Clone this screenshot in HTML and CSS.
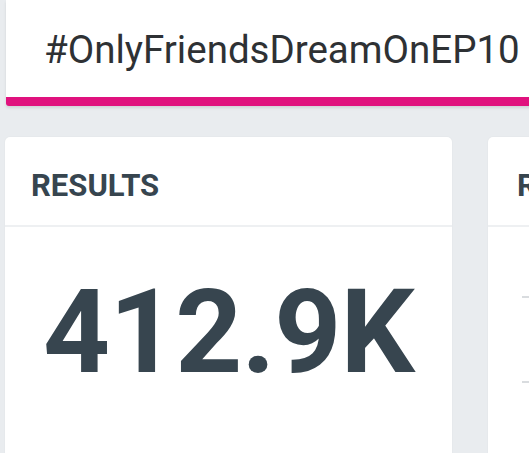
FILE: index.html
```html
<!DOCTYPE html>
<html>
<head>
<meta charset="utf-8">
<link rel="stylesheet" href="styles.css">
</head>
<body>
<div class="page">
  <div class="search">
    <div class="search-text">#OnlyFriendsDreamOnEP10</div>
  </div>
  <div class="cards">
    <div class="card">
      <div class="card-head">RESULTS</div>
      <div class="card-body">
        <div class="big">412.9K</div>
      </div>
    </div>
    <div class="card card-second">
      <div class="card-head">RESULTS</div>
      <div class="card-body lines">
        <div class="dash"></div>
        <div class="dash"></div>
      </div>
    </div>
  </div>
</div>
</body>
</html>
```

FILE: styles.css
```css
html, body {
  margin: 0;
  padding: 0;
  width: 529px;
  height: 453px;
  overflow: hidden;
  background: #e9ecef;
  font-family: Roboto, "Liberation Sans", sans-serif;
}
.page {
  padding-left: 6px;
  width: 700px;
}
.search {
  background: #ffffff;
  height: 97px;
  border-bottom: 9px solid #e0127e;
  border-radius: 0 0 0 3px;
  box-shadow: 0 2px 3px rgba(0,0,0,0.10);
  box-sizing: content-box;
  display: flex;
  align-items: center;
}
.search-text {
  margin-left: 38px;
  font-size: 38.5px;
  color: #2e3134;
  padding-top: 1px;
  white-space: nowrap;
}
.cards {
  display: flex;
  gap: 36px;
  margin-top: 31px;
  margin-left: -1px;
}
.card {
  width: 447px;
  flex: none;
  background: #ffffff;
  border-radius: 5px;
  height: 330px;
  box-shadow: 0 0 2px rgba(0,0,0,0.06);
}
.card-head {
  height: 90px;
  box-sizing: border-box;
  border-bottom: 2px solid #eef0f2;
  padding-left: 26px;
  padding-top: 30px;
  font-size: 31px;
  font-weight: 700;
  color: #37454f;
  white-space: nowrap;
  overflow: hidden;
}
.card-body {
  display: flex;
  padding-left: 38px;
  padding-top: 47px;
}
.big {
  font-size: 117px;
  font-weight: 700;
  color: #37454f;
  line-height: 1;
  letter-spacing: -1px;
}
.card-second .card-head {
  padding-left: 29px;
}
.lines {
  flex-direction: column;
  padding-left: 34px;
  padding-top: 69px;
  gap: 83px;
}
.dash {
  width: 60px;
  height: 2px;
  background: #d9dcdf;
}
```
